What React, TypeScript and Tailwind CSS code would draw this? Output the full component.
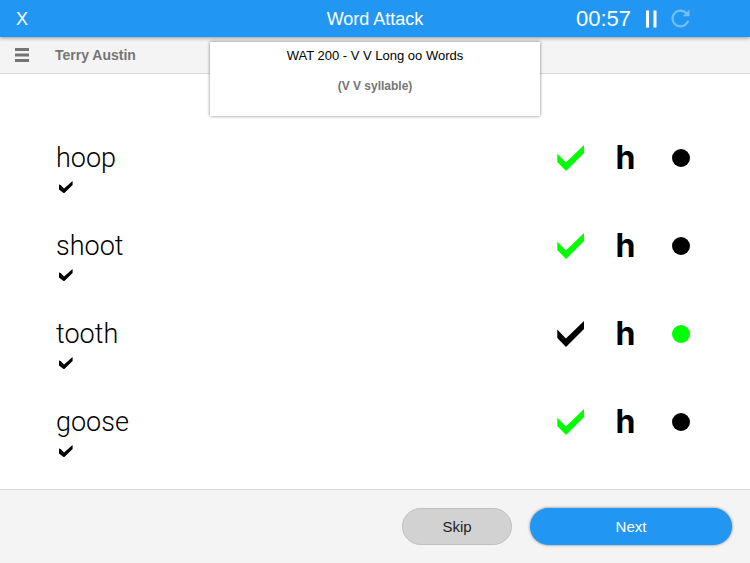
import { useState } from "react";

type Mark = "correct" | "help" | "dot";

const initial: { word: string; mark: Mark }[] = [
  { word: "hoop", mark: "correct" },
  { word: "shoot", mark: "correct" },
  { word: "tooth", mark: "dot" },
  { word: "goose", mark: "correct" },
];

function Check({ className }: { className: string }) {
  return (
    <svg viewBox="0 0 27 26" className={className} fill="currentColor" aria-hidden="true">
      <path d="M0.3 8.5 8.9 17.5 27 0V8L9 26 0.3 17Z" />
    </svg>
  );
}

function SmallCheck() {
  return (
    <svg viewBox="0 0 14 12" className="mt-[3px] ml-[3px] h-3 w-[14px]" fill="currentColor" aria-hidden="true">
      <path d="M0 3.6 1.6 4 5 7.6 13.6 0V4L5 12.4 0 8.4Z" />
    </svg>
  );
}

function MarkButton({
  label,
  active,
  onClick,
  children,
}: {
  label: string;
  active: boolean;
  onClick: () => void;
  children: React.ReactNode;
}) {
  return (
    <button
      type="button"
      aria-label={label}
      aria-pressed={active}
      onClick={onClick}
      className={`flex h-10 w-[55px] items-center justify-center ${active ? "text-[#00ff00]" : "text-black"}`}
    >
      {children}
    </button>
  );
}

export default function App() {
  const [rows, setRows] = useState(initial);
  const mark = (index: number, value: Mark) =>
    setRows(rows.map((row, i) => (i === index ? { ...row, mark: value } : row)));

  return (
    <div className="flex min-h-screen flex-col bg-white font-['Liberation_Sans',Arial,sans-serif] text-black">
      <header className="relative z-10 grid h-[37px] grid-cols-[1fr_auto_1fr] items-center bg-[#2196f3] text-white shadow-[0_1px_4px_rgba(0,0,0,0.4)]">
        <button type="button" aria-label="Close" className="ml-4 justify-self-start text-lg leading-6">
          X
        </button>
        <h1 className="text-lg leading-6">Word Attack</h1>
        <div className="flex items-center justify-end pr-14">
          <span className="text-[22px] leading-6">00:57</span>
          <button type="button" aria-label="Pause" className="ml-3">
            <svg viewBox="0 0 16 18" className="h-[18px] w-4" fill="currentColor">
              <path d="M3 0.5h3v17H3zM10.5 0.5h3v17h-3z" />
            </svg>
          </button>
          <button type="button" aria-label="Restart" className="ml-2 text-[#74bef8]">
            <svg viewBox="0 0 24 24" className="size-[27px]" fill="currentColor">
              <path d="M17.65 6.35C16.2 4.9 14.21 4 12 4c-4.42 0-7.99 3.58-7.99 8s3.57 8 7.99 8c3.73 0 6.84-2.55 7.73-6h-2.08c-.82 2.33-3.04 4-5.65 4-3.31 0-6-2.69-6-6s2.69-6 6-6c1.66 0 3.14.69 4.22 1.78L14 10h6V4l-2.35 2.35z" />
            </svg>
          </button>
        </div>
      </header>

      <div className="relative flex h-[37px] items-center border-b border-[#d8d8d8] bg-[#f4f4f4] pl-[15px] text-[#757575]">
        <button type="button" aria-label="Menu">
          <svg viewBox="0 0 14 14" className="size-[14px]" fill="currentColor">
            <path d="M0 0h14v3H0zM0 5.5h14v3H0zM0 11h14v3H0z" />
          </svg>
        </button>
        <span className="ml-[26px] text-sm leading-5 font-bold">Terry Austin</span>
        <section className="absolute top-[5px] left-1/2 z-20 h-[74px] w-[330px] -translate-x-1/2 bg-white pt-1 text-center shadow-[0_0_3px_rgba(0,0,0,0.5)]">
          <h2 className="text-[13px] leading-5 text-black">WAT 200 - V V Long oo Words</h2>
          <p className="mt-3 text-xs leading-4 font-bold">(V V syllable)</p>
        </section>
      </div>

      <main className="flex-1 pt-16 pr-[42px] pb-6 pl-14">
        <ul className="flex flex-col gap-[33px]">
          {rows.map((row, i) => (
            <li key={row.word} className="flex items-start justify-between">
              <div>
                <p className="font-['Roboto',sans-serif] text-[27px] leading-10 font-light">{row.word}</p>
                <SmallCheck />
              </div>
              <div className="flex" role="group" aria-label={`Mark ${row.word}`}>
                <MarkButton label="Correct" active={row.mark === "correct"} onClick={() => mark(i, "correct")}>
                  <Check className="h-[26px] w-[27px]" />
                </MarkButton>
                <MarkButton label="Help" active={row.mark === "help"} onClick={() => mark(i, "help")}>
                  <span className="font-['Inter',sans-serif] text-[32px] leading-10 font-bold">h</span>
                </MarkButton>
                <MarkButton label="Dot" active={row.mark === "dot"} onClick={() => mark(i, "dot")}>
                  <span className="size-[18px] rounded-full bg-current" />
                </MarkButton>
              </div>
            </li>
          ))}
        </ul>
      </main>

      <footer className="flex h-[74px] items-center justify-end gap-[18px] border-t border-[#d8d8d8] bg-[#f4f4f4] pr-[18px] text-[15px] leading-5">
        <button type="button" className="h-[37px] w-[110px] rounded-full border border-[#c0c0c0] bg-[#d2d2d2] text-[#222222]">
          Skip
        </button>
        <button type="button" className="h-[37px] w-[202px] rounded-full bg-[#2196f3] text-white shadow-[0_0_3px_rgba(0,0,0,0.5)]">
          Next
        </button>
      </footer>
    </div>
  );
}
